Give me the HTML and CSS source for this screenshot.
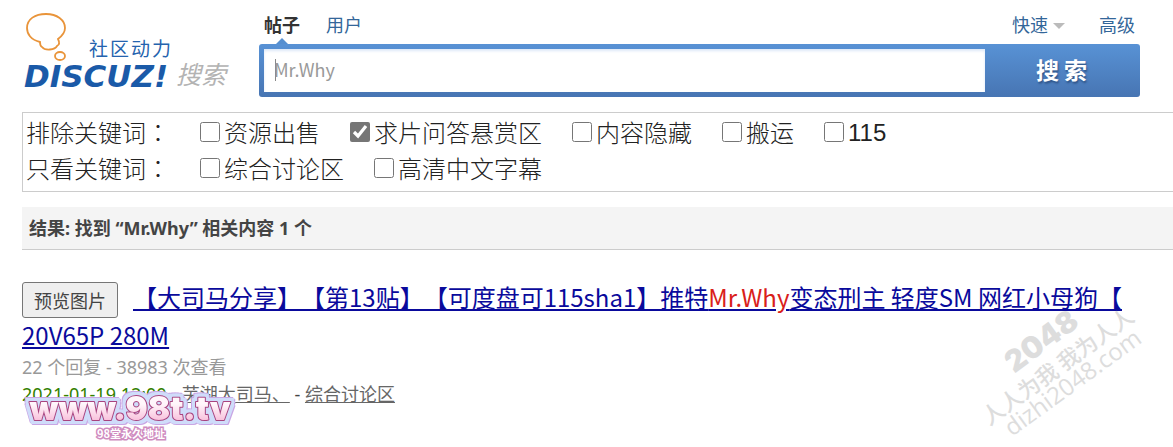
FILE: index.html
```html
<!DOCTYPE html>
<html lang="zh-CN">
<head>
  <meta charset="UTF-8" />
  <meta name="viewport" content="width=device-width, initial-scale=1" />
  <title>搜索 - Discuz!</title>
  <link rel="stylesheet" href="styles.css">
</head>
<body>
  <header class="top">
    <a class="logo" href="#" aria-label="Discuz! 搜索">
      <svg width="211" height="84" viewBox="0 0 211 84">
        <g fill="none" stroke="#e9943a" stroke-width="1.8">
          <path d="M18 34C9 32 5 26 5 20C5 11 13 6 24 6C35 6 43 12 43 20C43 25 40 28 36 31C38 35 37 37 35 38C33 42 23 43 20 39C18 38 18 36 18 34Z"/>
          <ellipse cx="38" cy="48" rx="5" ry="4"/>
        </g>
        <text class="logo-cn" x="67" y="48">社</text>
        <text class="logo-cn" x="88" y="48">区</text>
        <text class="logo-cn" x="109" y="48">动</text>
        <text class="logo-cn" x="130" y="48">力</text>
        <text class="logo-name" x="2" y="79">DISCUZ!</text>
        <text class="logo-search" x="154" y="76">搜索</text>
      </svg>
    </a>
    <form class="search">
      <nav class="tabs">
        <a class="tab active" href="#">帖子</a>
        <a class="tab" href="#">用户</a>
        <a class="tab quick" href="#">快速</a>
        <a class="tab" href="#">高级</a>
      </nav>
      <div class="bar">
        <input class="keyword" type="text" placeholder="Mr.Why" aria-label="关键词">
        <button class="submit" type="submit">搜 索</button>
      </div>
    </form>
  </header>

  <section class="filters">
    <div class="filter-row">
      <span class="filter-name">排除关键词<span class="colon" lang="zh-TW">：</span></span>
      <label><input type="checkbox">资源出售</label>
      <label><input type="checkbox" checked>求片问答悬赏区</label>
      <label><input type="checkbox">内容隐藏</label>
      <label><input type="checkbox">搬运</label>
      <label class="num"><input type="checkbox">115</label>
    </div>
    <div class="filter-row">
      <span class="filter-name">只看关键词<span class="colon" lang="zh-TW">：</span></span>
      <label><input type="checkbox">综合讨论区</label>
      <label><input type="checkbox">高清中文字幕</label>
    </div>
  </section>

  <h2 class="summary">结果: 找到 “Mr.Why” 相关内容 1 个</h2>

  <main class="result">
    <h3 class="title"><button class="preview" type="button">预览图片</button><a href="#">【大司马分享】【第13贴】【可度盘可115sha1】推特<em>Mr.Why</em>变态刑主 轻度SM 网红小母狗【20V65P 280M</a></h3>
    <p class="stats">22 个回复 - 38983 次查看</p>
    <p class="meta"><span class="date">2021-01-19 12:00</span> - <a href="#">芜湖大司马、</a> - <a href="#">综合讨论区</a></p>

    <svg class="sticker" width="220" height="66" viewBox="0 0 220 66" aria-hidden="true">
      <defs>
        <linearGradient id="pink" x1="0" y1="0" x2="0" y2="1">
          <stop offset="0.4" stop-color="#fff6fb"/>
          <stop offset="0.85" stop-color="#f8bcd9"/>
        </linearGradient>
      </defs>
      <text class="site" x="108" y="40" fill="url(#pink)">www.98t.tv</text>
      <text class="note" x="109" y="58">98堂永久地址</text>
    </svg>

    <svg class="watermark" width="190" height="160" viewBox="0 0 190 160" aria-hidden="true">
      <g transform="translate(29 141) rotate(-36)">
        <text class="wm-big" x="39" y="-50">2048</text>
        <text class="wm-cn" x="-12" y="-22">人人为我 我为人人</text>
        <text class="wm-url" x="0" y="0">dizhi2048.com</text>
      </g>
    </svg>
  </main>
</body>
</html>
```
FILE: styles.css
```css
body {
  margin: 0;
  padding-left: 22px;
  font-family: "Noto Sans CJK SC", sans-serif;
  font-size: 18px;
  color: #444;
  background: #fff;
  text-spacing-trim: space-all;
}

.top {
  display: flex;
  height: 104px;
  padding: 8px 33px 0 0;
  box-sizing: border-box;
}
.logo {
  width: 237px;
  flex: none;
}
.logo svg {
  overflow: visible;
}
.logo-cn {
  font-size: 19px;
  fill: #2563ae;
}
.logo-name {
  font: italic bold 31px "DejaVu Sans", sans-serif;
  fill: #1a5aa8;
}
.logo-search {
  font-size: 25px;
  font-style: italic;
  fill: #b3b3b3;
}

.search {
  flex: 1;
}
.tabs {
  display: flex;
  gap: 26px;
  height: 36px;
  padding: 0 5px;
  line-height: 32px;
}
.tab {
  position: relative;
  color: #336699;
  text-decoration: none;
}
.tab.active {
  color: #333;
  font-weight: bold;
}
.tab.active::after {
  content: "";
  position: absolute;
  left: 12px;
  bottom: 0;
  border: 6px solid transparent;
  border-top: 0;
  border-bottom-color: #568fd0;
}
.quick {
  margin-left: auto;
  margin-right: 8px;
}
.quick::after {
  content: "";
  display: inline-block;
  margin-left: 5px;
  vertical-align: 3px;
  border: 6px solid transparent;
  border-top-color: #bbb;
  border-bottom: 0;
}
.bar {
  display: flex;
  height: 53px;
  padding: 5px 0 5px 5px;
  box-sizing: border-box;
  border-radius: 3px;
  background: linear-gradient(#5892d5, #4775b3);
}
.keyword {
  flex: 1;
  min-width: 0;
  border: 0;
  padding: 0 10px 3px;
  font: 18px "Noto Sans CJK SC", sans-serif;
  /* text cursor */
  background: linear-gradient(#888, #888) 11px 10px / 1px 22px no-repeat #fff;
  box-shadow: inset 0 2px 3px #dde8f8;
}
.keyword::placeholder {
  color: #999;
}
.submit {
  width: 155px;
  border: 0;
  padding: 0 2px 4px 0;
  background: none;
  color: #fff;
  font: bold 23px "Noto Sans CJK SC", sans-serif;
  text-shadow: 1px 2px 2px #2f5488;
}

.filters {
  margin-top: 8px;
  padding: 3px;
  height: 80px;
  box-sizing: border-box;
  border: 1px solid #ccc;
  border-right: 0;
  font-size: 24px;
  font-weight: 300;
  color: #222;
}
.filter-row {
  display: flex;
  gap: 30px;
  height: 36px;
  line-height: 32px;
}
.filter-row label {
  display: flex;
}
.colon {
  font-family: "Noto Sans CJK TC", sans-serif;
}
.num {
  font-family: "Liberation Sans", sans-serif;
  line-height: 34px;
}
.filter-row input {
  width: 20px;
  height: 20px;
  margin: 6px 4px 0 0;
  accent-color: #767676;
}

.summary {
  margin: 15px 0 0;
  padding: 0 7px;
  border-bottom: 1px solid #ccc;
  background: #f4f4f4;
  font-family: "Noto Sans", "Noto Sans CJK SC", sans-serif;
  font-size: 18px;
  line-height: 42px;
}

.result {
  position: relative;
  padding: 28px 33px 40px 0;
}
.title {
  margin: 0;
  padding-right: 10px;
  font-size: 24px;
  font-weight: normal;
  line-height: 38px;
  line-break: anywhere;
}
.title a {
  color: #0a0a9c;
  text-decoration: underline;
}
.title em {
  color: #d9201a;
  font-style: normal;
}
.preview {
  height: 36px;
  margin: -4px 15px -4px 0;
  padding: 0 11px;
  border: 1px solid #767676;
  border-radius: 3px;
  background: #efefef;
  color: #444;
  font: 18px "Noto Sans CJK SC", sans-serif;
  vertical-align: middle;
}
.stats,
.meta {
  margin: 0;
  font-family: "Noto Sans", "Noto Sans CJK SC", sans-serif;
  line-height: 27px;
}
.stats {
  color: #999;
}
.meta a {
  color: #666;
}
.date {
  color: #338000;
}

.sticker {
  position: absolute;
  left: 0;
  top: 130px;
  overflow: visible;
}
.site {
  font: 900 33px Inter, sans-serif;
  text-anchor: middle;
  stroke: #a8437f;
  stroke-width: 2px;
  stroke-linejoin: round;
  paint-order: stroke;
  filter: drop-shadow(3px 0 0 #cfdcfa) drop-shadow(-3px 0 0 #cfdcfa)
    drop-shadow(0 3px 0 #cfdcfa) drop-shadow(0 -3px 0 #cfdcfa)
    drop-shadow(1px 1px 0 #c9a6e4) drop-shadow(-1px -1px 0 #c9a6e4);
}
.note {
  font-size: 11px;
  font-weight: bold;
  text-anchor: middle;
  fill: #fff;
  stroke: #cf8cc0;
  stroke-width: 3px;
  paint-order: stroke;
}

.watermark {
  position: absolute;
  right: 0;
  top: 46px;
  fill: #ddd;
  pointer-events: none;
}
.wm-big {
  font: 900 30px Inter, sans-serif;
}
.wm-cn {
  font-size: 22px;
  font-weight: 500;
}
.wm-url {
  font: 24px "Open Sans", sans-serif;
}
```
